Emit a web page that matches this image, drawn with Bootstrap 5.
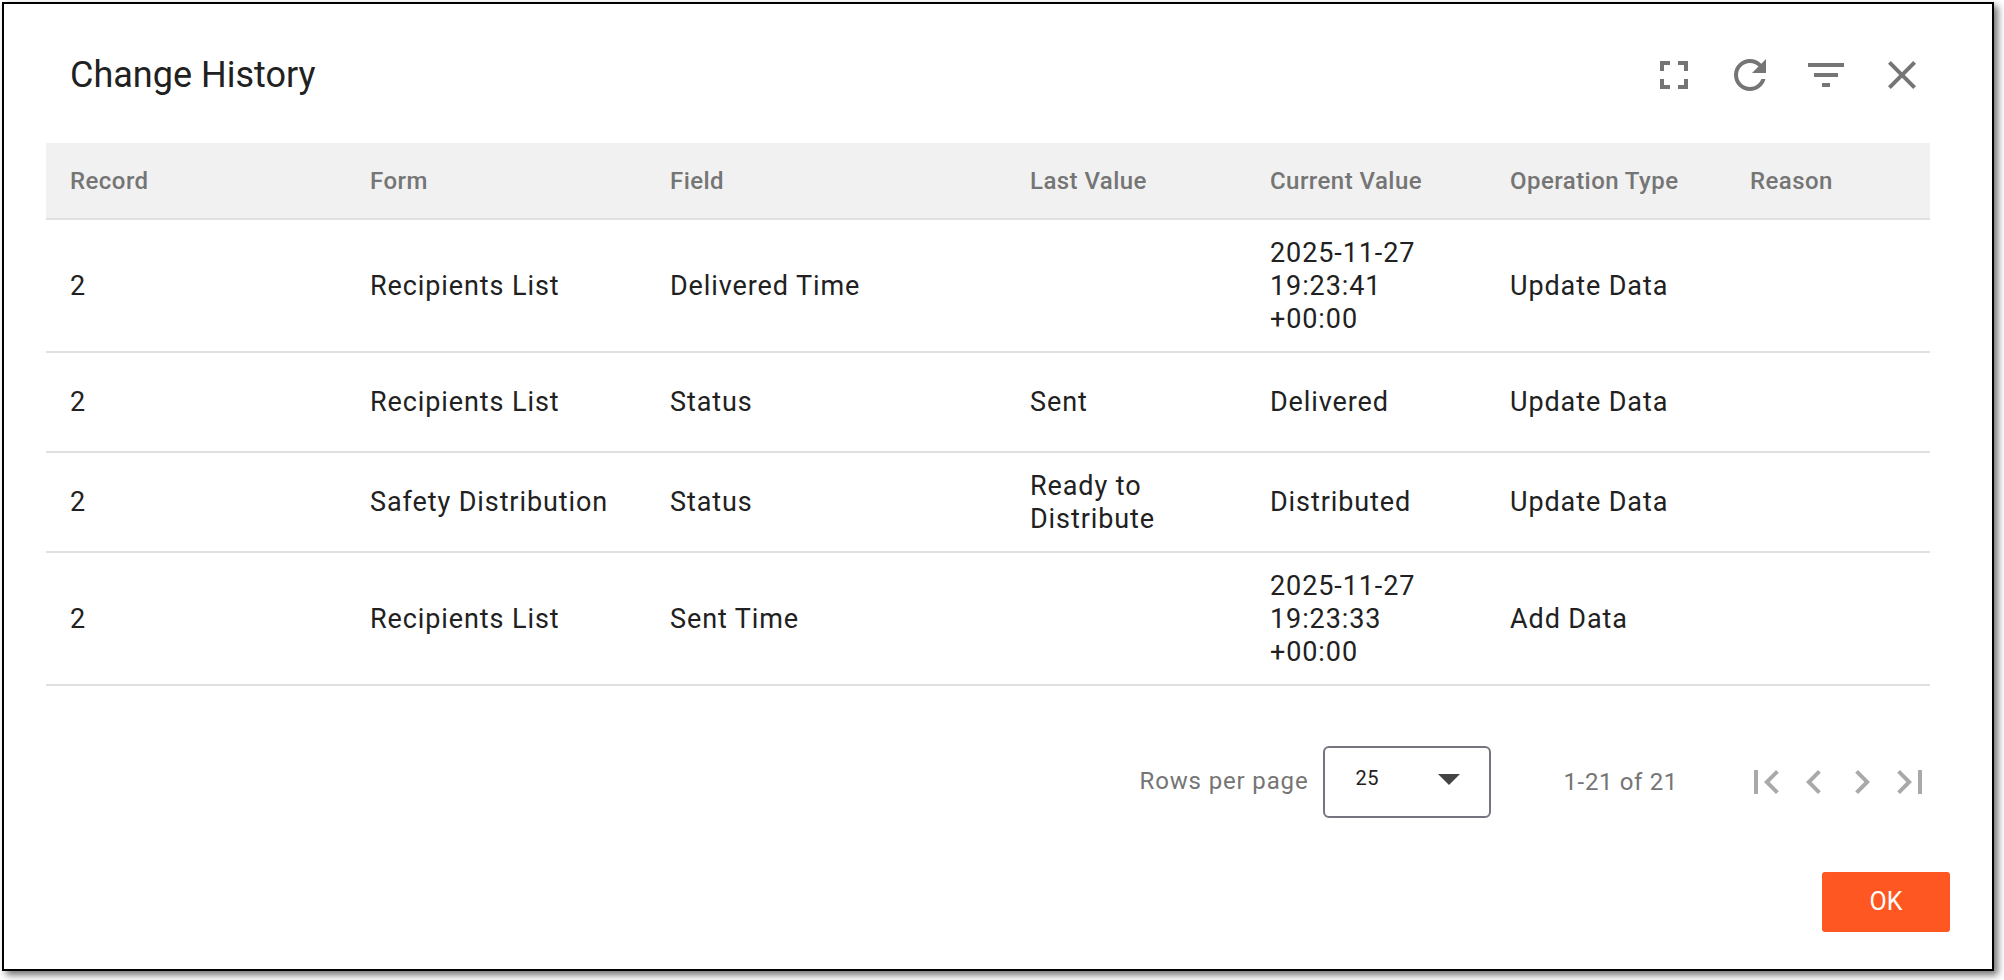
<!doctype html>
<html lang="en"><head><meta charset="utf-8"><title>Change History</title>
<link href="https://cdn.jsdelivr.net/npm/bootstrap@5.3.0/dist/css/bootstrap.min.css" rel="stylesheet">
<style>
html,body{background:#fff;height:100%;overflow:hidden}
body{font-family:Roboto,"Liberation Sans",sans-serif;color:#212121}
.dlg-frame{margin:2px 0 0 2px;width:1992px;height:969px;border:2px solid #000;box-shadow:4px 4px 7px rgba(0,0,0,.55);background:#fff;padding:0 62px 0 42px}
.dlg-head{height:139px;padding:0 0 0 24px}
.dlg-title{font-size:36px;font-weight:400;color:#212121;margin:5px 0 0}
.dlg-icons{gap:28px;margin-right:4px;padding-top:3px}
.ico48{width:48px;height:48px;flex:none;display:block}
.ico-grey{fill:#757575}
.ico-dim{fill:#a9a9a9}
.hist-table{width:1884px;table-layout:fixed;margin:0;font-size:27px;letter-spacing:.9px;line-height:33px}
.hist-table th{background:#f1f1f1;color:#757575;font-weight:500;font-size:24px;letter-spacing:.45px;height:76px;padding:2px 24px 0;border-bottom:2px solid #e0e0e0;vertical-align:middle}
.hist-table td{padding:1px 24px 0;color:#212121;border-bottom:2px solid #e0e0e0;vertical-align:middle}
.row-a{height:133px}.row-b{height:100px}
.pager{height:72px;margin-top:60px;font-size:24px;color:#757575;letter-spacing:.65px}
.rows-label{margin-right:15px;margin-top:-2px;letter-spacing:.85px}
.rows-select{width:168px;height:72px;border:2px solid #757580;border-radius:6px;padding:15px 0 0 30px;color:#212121;font-size:20px;position:relative}
.rows-caret{position:absolute;right:29px;top:26px;width:0;height:0;border-left:11px solid transparent;border-right:11px solid transparent;border-top:11px solid #444}
.page-count{margin:0 64px 0 72px}
.pager-ico{margin-right:-4px}
.foot-row{margin-top:54px;margin-right:-20px}
.ok-btn{width:128px;height:60px;background:#ff5722;border:0;border-radius:3px;color:#fff;font-size:25px;padding:0}
.ok-btn:hover{background:#ff5722;color:#fff}
</style></head>
<body>
<div class="dlg-frame">
  <div class="dlg-head d-flex align-items-center justify-content-between">
    <h1 class="dlg-title">Change History</h1>
    <div class="dlg-icons d-flex">
      <svg class="ico48 ico-grey" viewBox="0 0 24 24"><path d="M7 14H5v5h5v-2H7v-3zm-2-4h2V7h3V5H5v5zm12 7h-3v2h5v-5h-2v3zM14 5v2h3v3h2V5h-5z"/></svg>
      <svg class="ico48 ico-grey" viewBox="0 0 24 24"><path d="M17.65 6.35C16.2 4.9 14.21 4 12 4c-4.42 0-7.99 3.58-7.99 8s3.57 8 7.99 8c3.73 0 6.84-2.55 7.73-6h-2.08c-.82 2.33-3.04 4-5.65 4-3.31 0-6-2.69-6-6s2.69-6 6-6c1.66 0 3.14.69 4.22 1.78L13 11h7V4l-2.35 2.35z"/></svg>
      <svg class="ico48 ico-grey" viewBox="0 0 24 24"><path d="M10 18h4v-2h-4v2zM3 6v2h18V6H3zm3 7h12v-2H6v2z"/></svg>
      <svg class="ico48 ico-grey" viewBox="0 0 24 24"><path d="M19 6.41L17.59 5 12 10.59 6.41 5 5 6.41 10.59 12 5 17.59 6.41 19 12 13.41 17.59 19 19 17.59 13.41 12z"/></svg>
    </div>
  </div>
  <table class="hist-table">
    <colgroup><col style="width:300px"><col style="width:300px"><col style="width:360px"><col style="width:240px"><col style="width:240px"><col style="width:240px"><col></colgroup>
    <thead><tr><th>Record</th><th>Form</th><th>Field</th><th>Last Value</th><th>Current Value</th><th>Operation Type</th><th>Reason</th></tr></thead>
    <tbody>
      <tr class="row-a"><td>2</td><td>Recipients List</td><td>Delivered Time</td><td></td><td>2025-11-27 19:23:41 +00:00</td><td>Update Data</td><td></td></tr>
      <tr class="row-b"><td>2</td><td>Recipients List</td><td>Status</td><td>Sent</td><td>Delivered</td><td>Update Data</td><td></td></tr>
      <tr class="row-b"><td>2</td><td>Safety Distribution</td><td>Status</td><td>Ready to Distribute</td><td>Distributed</td><td>Update Data</td><td></td></tr>
      <tr class="row-a"><td>2</td><td>Recipients List</td><td>Sent Time</td><td></td><td>2025-11-27 19:23:33 +00:00</td><td>Add Data</td><td></td></tr>
    </tbody>
  </table>
  <div class="pager d-flex align-items-center justify-content-end">
    <span class="rows-label">Rows per page</span>
    <div class="rows-select">25<span class="rows-caret"></span></div>
    <span class="page-count">1-21 of 21</span>
    <div class="d-flex pager-ico">
      <svg class="ico48 ico-dim" viewBox="0 0 24 24"><path d="M18.41 16.59L13.82 12l4.59-4.59L17 6l-6 6 6 6zM6 6h2v12H6z"/></svg>
      <svg class="ico48 ico-dim" viewBox="0 0 24 24"><path d="M15.41 7.41L14 6l-6 6 6 6 1.41-1.41L10.83 12z"/></svg>
      <svg class="ico48 ico-dim" viewBox="0 0 24 24"><path d="M10 6L8.59 7.41 13.17 12l-4.58 4.59L10 18l6-6z"/></svg>
      <svg class="ico48 ico-dim" viewBox="0 0 24 24"><path d="M5.59 7.41L10.18 12l-4.59 4.59L7 18l6-6-6-6zM16 6h2v12h-2z"/></svg>
    </div>
  </div>
  <div class="foot-row d-flex justify-content-end"><button type="button" class="btn ok-btn">OK</button></div>
</div>
<script src="https://cdn.jsdelivr.net/npm/bootstrap@5.3.0/dist/js/bootstrap.bundle.min.js"></script>
</body></html>
